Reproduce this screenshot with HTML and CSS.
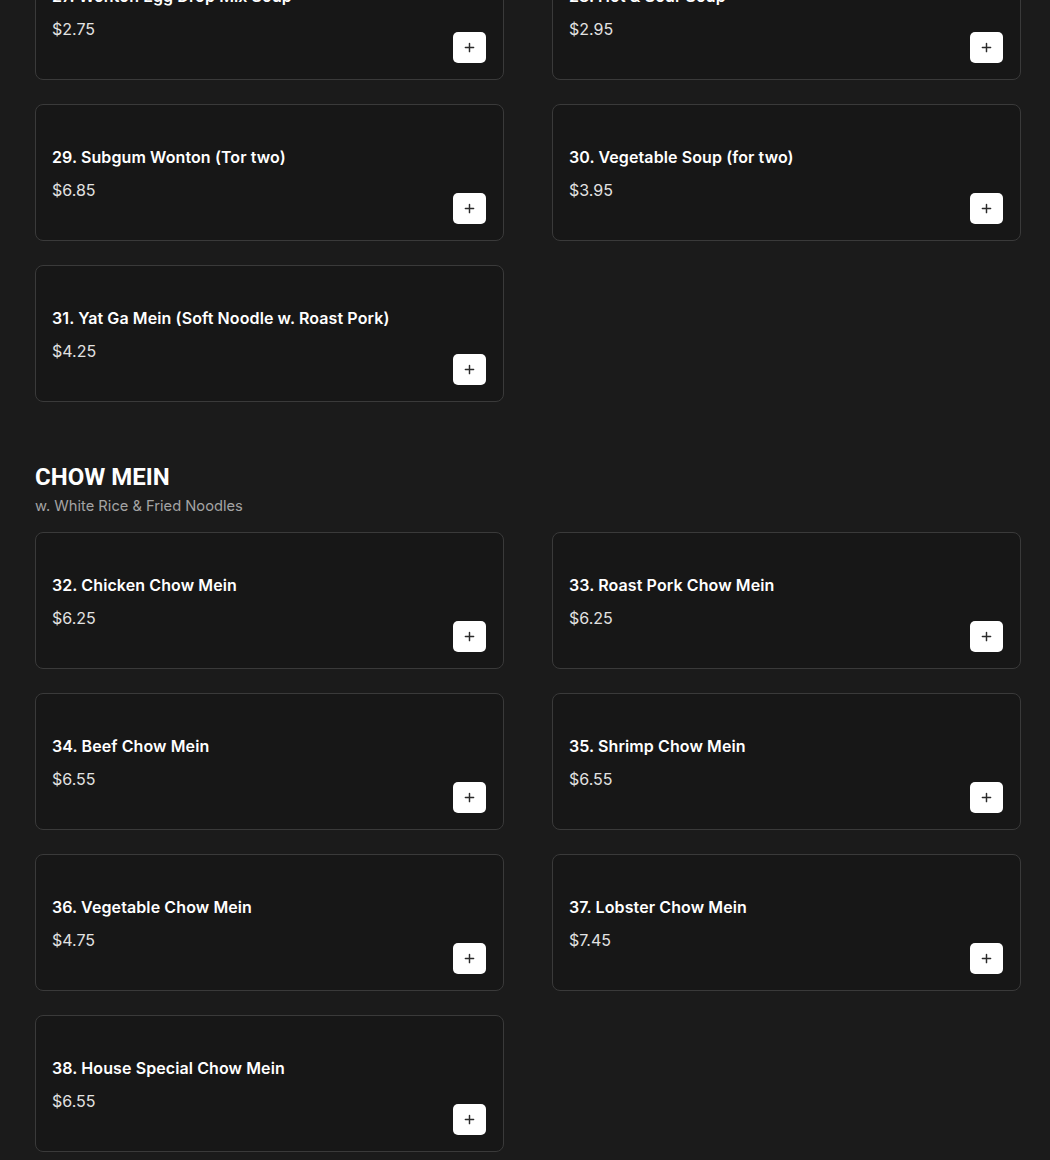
FILE: index.html
```html
<!DOCTYPE html>
<html lang="en">
<head>
<meta charset="utf-8">
<title>Menu</title>
<link rel="stylesheet" href="styles.css">
</head>
<body>
<main class="menu">
  <section class="section section-first">
    <div class="grid">
      <div class="card">
        <div class="info"><h3 class="name">27. Wonton Egg Drop Mix Soup</h3><p class="price">$2.75</p></div>
        <button class="add" aria-label="Add"><svg viewBox="0 0 12 12" width="12" height="12"><path d="M6 1.5v9M1.5 6h9" stroke="#2b2b2b" stroke-width="1.6" stroke-linecap="round"/></svg></button>
      </div>
      <div class="card">
        <div class="info"><h3 class="name">28. Hot &amp; Sour Soup <svg class="spicy" viewBox="0 0 12 12" width="12" height="12"><path d="M3 9c3 0 6-2 7-6l-2-1C7 5 5 7 2 8z" fill="#c0392b"/></svg></h3><p class="price">$2.95</p></div>
        <button class="add" aria-label="Add"><svg viewBox="0 0 12 12" width="12" height="12"><path d="M6 1.5v9M1.5 6h9" stroke="#2b2b2b" stroke-width="1.6" stroke-linecap="round"/></svg></button>
      </div>
      <div class="card">
        <div class="info"><h3 class="name">29. Subgum Wonton (Tor two)</h3><p class="price">$6.85</p></div>
        <button class="add" aria-label="Add"><svg viewBox="0 0 12 12" width="12" height="12"><path d="M6 1.5v9M1.5 6h9" stroke="#2b2b2b" stroke-width="1.6" stroke-linecap="round"/></svg></button>
      </div>
      <div class="card">
        <div class="info"><h3 class="name">30. Vegetable Soup (for two)</h3><p class="price">$3.95</p></div>
        <button class="add" aria-label="Add"><svg viewBox="0 0 12 12" width="12" height="12"><path d="M6 1.5v9M1.5 6h9" stroke="#2b2b2b" stroke-width="1.6" stroke-linecap="round"/></svg></button>
      </div>
      <div class="card">
        <div class="info"><h3 class="name">31. Yat Ga Mein (Soft Noodle w. Roast Pork)</h3><p class="price">$4.25</p></div>
        <button class="add" aria-label="Add"><svg viewBox="0 0 12 12" width="12" height="12"><path d="M6 1.5v9M1.5 6h9" stroke="#2b2b2b" stroke-width="1.6" stroke-linecap="round"/></svg></button>
      </div>
    </div>
  </section>

  <section class="section">
    <h2 class="section-title">CHOW MEIN</h2>
    <p class="section-sub">w. White Rice &amp; Fried Noodles</p>
    <div class="grid">
      <div class="card">
        <div class="info"><h3 class="name">32. Chicken Chow Mein</h3><p class="price">$6.25</p></div>
        <button class="add" aria-label="Add"><svg viewBox="0 0 12 12" width="12" height="12"><path d="M6 1.5v9M1.5 6h9" stroke="#2b2b2b" stroke-width="1.6" stroke-linecap="round"/></svg></button>
      </div>
      <div class="card">
        <div class="info"><h3 class="name">33. Roast Pork Chow Mein</h3><p class="price">$6.25</p></div>
        <button class="add" aria-label="Add"><svg viewBox="0 0 12 12" width="12" height="12"><path d="M6 1.5v9M1.5 6h9" stroke="#2b2b2b" stroke-width="1.6" stroke-linecap="round"/></svg></button>
      </div>
      <div class="card">
        <div class="info"><h3 class="name">34. Beef Chow Mein</h3><p class="price">$6.55</p></div>
        <button class="add" aria-label="Add"><svg viewBox="0 0 12 12" width="12" height="12"><path d="M6 1.5v9M1.5 6h9" stroke="#2b2b2b" stroke-width="1.6" stroke-linecap="round"/></svg></button>
      </div>
      <div class="card">
        <div class="info"><h3 class="name">35. Shrimp Chow Mein</h3><p class="price">$6.55</p></div>
        <button class="add" aria-label="Add"><svg viewBox="0 0 12 12" width="12" height="12"><path d="M6 1.5v9M1.5 6h9" stroke="#2b2b2b" stroke-width="1.6" stroke-linecap="round"/></svg></button>
      </div>
      <div class="card">
        <div class="info"><h3 class="name">36. Vegetable Chow Mein</h3><p class="price">$4.75</p></div>
        <button class="add" aria-label="Add"><svg viewBox="0 0 12 12" width="12" height="12"><path d="M6 1.5v9M1.5 6h9" stroke="#2b2b2b" stroke-width="1.6" stroke-linecap="round"/></svg></button>
      </div>
      <div class="card">
        <div class="info"><h3 class="name">37. Lobster Chow Mein</h3><p class="price">$7.45</p></div>
        <button class="add" aria-label="Add"><svg viewBox="0 0 12 12" width="12" height="12"><path d="M6 1.5v9M1.5 6h9" stroke="#2b2b2b" stroke-width="1.6" stroke-linecap="round"/></svg></button>
      </div>
      <div class="card">
        <div class="info"><h3 class="name">38. House Special Chow Mein</h3><p class="price">$6.55</p></div>
        <button class="add" aria-label="Add"><svg viewBox="0 0 12 12" width="12" height="12"><path d="M6 1.5v9M1.5 6h9" stroke="#2b2b2b" stroke-width="1.6" stroke-linecap="round"/></svg></button>
      </div>
    </div>
  </section>
</main>
</body>
</html>
```

FILE: styles.css
```css
html, body {
  margin: 0;
  padding: 0;
  background: #1b1b1b;
  overflow: hidden;
}

body {
  font-family: Inter, "Noto Sans", "Liberation Sans", sans-serif;
  color: #fff;
}

.menu {
  padding: 0 29px 0 35px;
  margin-top: -57px;
}

.section + .section {
  margin-top: 60px;
}

.section-title {
  margin: 0;
  font-family: Roboto, "Liberation Sans", sans-serif;
  font-weight: 700;
  font-size: 24px;
  line-height: 30px;
  color: #fff;
}

.section-sub {
  margin: 4px 0 16px;
  font-size: 14.7px;
  line-height: 20px;
  color: #a4a4a4;
}

.grid {
  display: grid;
  grid-template-columns: 469px 469px;
  column-gap: 48px;
  row-gap: 24px;
}

.card {
  box-sizing: border-box;
  height: 137px;
  display: flex;
  justify-content: space-between;
  align-items: flex-end;
  padding: 42px 17px 16px 16px;
  background: #171717;
  border: 1px solid #3a3a3a;
  border-radius: 8px;
}

.info {
  align-self: flex-start;
}

.name {
  margin: 0;
  font-size: 16px;
  font-weight: 600;
  letter-spacing: 0.1px;
  line-height: 20px;
  color: #fff;
}

.spicy {
  vertical-align: -1px;
}

.price {
  margin: 13px 0 0;
  font-size: 16px;
  font-weight: 400;
  line-height: 20px;
  color: #e2e2e2;
}

.add {
  width: 33px;
  height: 31px;
  padding: 0;
  border: none;
  border-radius: 5px;
  background: #fff;
  display: flex;
  align-items: center;
  justify-content: center;
  cursor: pointer;
}

.add svg {
  width: 11px;
  height: 11px;
}
```
